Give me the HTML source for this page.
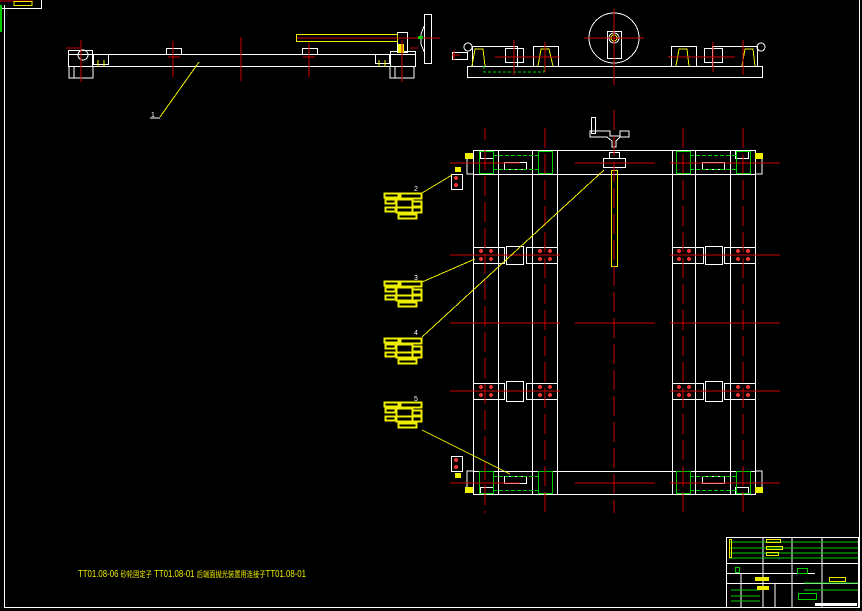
<!DOCTYPE html>
<html><head><meta charset="utf-8"><style>
html,body{margin:0;padding:0;background:#000;}
svg{display:block}
text{font-family:"Liberation Sans","Noto Sans CJK SC",sans-serif}
</style></head><body>
<svg width="862" height="611" viewBox="0 0 862 611" xmlns="http://www.w3.org/2000/svg" shape-rendering="crispEdges">
<rect width="862" height="611" fill="#000"/>
<g stroke="#fff" fill="none" stroke-width="1">
<path d="M4.5 5V607.5H859.5V0"/>
<path d="M0 8.5H41.5V0"/>
</g>
<line x1="0" y1="1" x2="33" y2="1" stroke="#c00"/>
<rect x="14" y="1.5" width="18" height="4" fill="none" stroke="#ee0"/>
<line x1="1" y1="5" x2="1" y2="32" stroke="#0c0" stroke-width="2"/>

<g stroke="#fff" fill="none">
<rect x="68.5" y="54.5" width="347" height="12"/>
<rect x="68.5" y="50.5" width="24" height="16"/>
<path d="M69 66v12h24V66M74 66v12h14"/>
<rect x="93.5" y="54.5" width="15" height="10"/>
<rect x="166.5" y="48.5" width="15" height="6"/>
<rect x="302.5" y="48.5" width="15" height="6"/>
<rect x="375.5" y="54.5" width="14" height="9"/>
<rect x="390.5" y="51.5" width="25" height="15"/>
<path d="M390 66v12h24V66M395 66v12h14"/>
<rect x="397.5" y="32.5" width="10" height="20"/>
<rect x="424.5" y="14.5" width="7" height="49"/>
<path d="M425 24l-4 10v10l4 10"/>
<circle cx="83" cy="55" r="5"/>
<path d="M150 118h10"/>
</g>
<rect x="296.5" y="34.5" width="101" height="7" fill="none" stroke="#ee0"/>
<rect x="398" y="44" width="6" height="9" fill="#ee0"/>
<line x1="297" y1="38" x2="435" y2="38" stroke="#c00"/>
<line x1="408" y1="38" x2="440" y2="38" stroke="#c00"/>
<rect x="418" y="36" width="5" height="3" fill="#0c0"/>
<g stroke="#c00">
<line x1="241" y1="37" x2="241" y2="81"/>
<line x1="173" y1="41" x2="173" y2="77"/>
<line x1="309" y1="43" x2="309" y2="77"/>
<line x1="81" y1="40" x2="81" y2="82"/>
<line x1="402" y1="40" x2="402" y2="82"/>
<line x1="66" y1="48" x2="80" y2="48"/>
<line x1="168" y1="57" x2="180" y2="57"/>
<line x1="303" y1="57" x2="315" y2="57"/>
<line x1="410" y1="48" x2="418" y2="48"/>
</g>
<g stroke="#ee0"><line x1="98" y1="60" x2="98" y2="67"/><line x1="104" y1="60" x2="104" y2="67"/><line x1="379" y1="60" x2="379" y2="67"/><line x1="385" y1="60" x2="385" y2="67"/></g>
<line x1="199" y1="62" x2="160" y2="117" stroke="#ee0"/>
<text x="151" y="117" fill="#fff" font-size="7">1</text>

<g stroke="#fff" fill="none">
<rect x="467.5" y="66.5" width="295" height="11"/>
<circle cx="614" cy="38" r="25"/>
<rect x="607.5" y="31.5" width="14" height="27"/>
<circle cx="614" cy="38" r="5"/>
<rect x="472.5" y="46.5" width="45" height="20"/>
<rect x="505.5" y="48.5" width="18" height="14"/>
<rect x="533.5" y="46.5" width="25" height="20"/>
<rect x="671.5" y="46.5" width="25" height="20"/>
<rect x="704.5" y="48.5" width="18" height="14"/>
<rect x="712.5" y="46.5" width="45" height="20"/>
<circle cx="468" cy="47" r="4"/><circle cx="761" cy="47" r="4"/>
<rect x="452.5" y="52.5" width="15" height="7"/>
</g>
<g stroke="#ee0" fill="none"><path d="M472 66l3-17h8l2 17M538 66l3-17h8l4 17M676 66l3-17h8l2 17M742 66l3-17h8l2 17"/></g>
<path d="M484 66v6h60v-6" stroke="#0c0" fill="none" stroke-dasharray="3 2"/>
<circle cx="614" cy="38" r="3" fill="none" stroke="#ee0"/>
<g stroke="#c00">
<line x1="614" y1="9" x2="614" y2="85"/>
<line x1="584" y1="38" x2="644" y2="38"/>
<line x1="514" y1="40" x2="514" y2="75"/>
<line x1="545" y1="42" x2="545" y2="72"/>
<line x1="713" y1="42" x2="713" y2="72"/>
<line x1="743" y1="40" x2="743" y2="75"/>
<line x1="495" y1="57" x2="560" y2="57"/>
<line x1="668" y1="57" x2="735" y2="57"/>
<line x1="452" y1="55" x2="460" y2="55"/>
<line x1="454" y1="50" x2="454" y2="60"/>
</g>

<g stroke="#fff" fill="none">
<path d="M473.5 150V495M498.5 150V495M532.5 150V495M557.5 150V495M672.5 150V495M695.5 150V495M730.5 150V495M755.5 150V495"/>
<rect x="473.5" y="150.5" width="282" height="344"/>
<path d="M473 174.5H755M473 471.5H755"/>
<path d="M467 153v21h6M762 153v21h-7M467 492v-21h6M762 492v-21h-7"/>
<rect x="473.5" y="247.5" width="31" height="16"/><rect x="526.5" y="247.5" width="31" height="16"/><rect x="506.5" y="246.5" width="17" height="18"/>
<rect x="672.5" y="247.5" width="31" height="16"/><rect x="724.5" y="247.5" width="31" height="16"/><rect x="705.5" y="246.5" width="17" height="18"/>
<rect x="473.5" y="383.5" width="31" height="16"/><rect x="526.5" y="383.5" width="31" height="16"/><rect x="506.5" y="381.5" width="17" height="20"/>
<rect x="672.5" y="383.5" width="31" height="16"/><rect x="724.5" y="383.5" width="31" height="16"/><rect x="705.5" y="381.5" width="17" height="20"/>
<rect x="504.5" y="162.5" width="22" height="7"/><rect x="702.5" y="162.5" width="22" height="7"/>
<rect x="504.5" y="476.5" width="22" height="7"/><rect x="702.5" y="476.5" width="22" height="7"/>
<rect x="603.5" y="158.5" width="22" height="9"/><rect x="609.5" y="152.5" width="10" height="6"/>
<path d="M590 131h20v5h10v-5h9v6h-9l-4 4v6h-4v-6l-5-4h-17z"/>
<rect x="591.5" y="117.5" width="4" height="16"/>
<rect x="451.5" y="174.5" width="11" height="15"/><rect x="451.5" y="456.5" width="11" height="15"/>
<rect x="480.5" y="151.5" width="13" height="7"/><rect x="735.5" y="151.5" width="13" height="7"/>
<rect x="480.5" y="487.5" width="13" height="7"/><rect x="735.5" y="487.5" width="13" height="7"/>
</g>
<g stroke="#0c0" fill="none">
<rect x="479.5" y="151.5" width="14" height="22"/><rect x="538.5" y="151.5" width="14" height="22"/>
<rect x="676.5" y="151.5" width="14" height="22"/><rect x="736.5" y="151.5" width="14" height="22"/>
<rect x="479.5" y="471.5" width="14" height="22"/><rect x="538.5" y="471.5" width="14" height="22"/>
<rect x="676.5" y="471.5" width="14" height="22"/><rect x="736.5" y="471.5" width="14" height="22"/>
<path d="M493 155.5H538M493 169.5H538M690 155.5H736M690 169.5H736M493 476.5H538M493 490.5H538M690 476.5H736M690 490.5H736" stroke-dasharray="4 2"/>
</g>
<rect x="611.5" y="170.5" width="6" height="96" fill="none" stroke="#ee0"/>
<g fill="#ee0"><rect x="465" y="153" width="8" height="6"/><rect x="755" y="153" width="8" height="6"/><rect x="465" y="487" width="8" height="6"/><rect x="755" y="487" width="8" height="6"/><rect x="455" y="167" width="6" height="5"/><rect x="455" y="473" width="6" height="5"/></g>
<g stroke="#c00">
<path d="M485 128V140M485 150V480M485 485V513M545 128V513M614 110V513M683 128V513M743 128V513" stroke-dasharray="20 6"/>
<path d="M450 163H520M575 163H655M670 163H780M450 255H560M670 255H780M450 323H560M575 323H655M670 323H780M450 391H560M670 391H780M450 483H520M575 483H655M670 483H780"/>
</g>
<g fill="#e33">
<circle cx="481" cy="251" r="2"/><circle cx="491" cy="251" r="2"/><circle cx="481" cy="259" r="2"/><circle cx="491" cy="259" r="2"/>
<circle cx="540" cy="251" r="2"/><circle cx="550" cy="251" r="2"/><circle cx="540" cy="259" r="2"/><circle cx="550" cy="259" r="2"/>
<circle cx="679" cy="251" r="2"/><circle cx="689" cy="251" r="2"/><circle cx="679" cy="259" r="2"/><circle cx="689" cy="259" r="2"/>
<circle cx="738" cy="251" r="2"/><circle cx="748" cy="251" r="2"/><circle cx="738" cy="259" r="2"/><circle cx="748" cy="259" r="2"/>
<circle cx="481" cy="387" r="2"/><circle cx="491" cy="387" r="2"/><circle cx="481" cy="395" r="2"/><circle cx="491" cy="395" r="2"/>
<circle cx="540" cy="387" r="2"/><circle cx="550" cy="387" r="2"/><circle cx="540" cy="395" r="2"/><circle cx="550" cy="395" r="2"/>
<circle cx="679" cy="387" r="2"/><circle cx="689" cy="387" r="2"/><circle cx="679" cy="395" r="2"/><circle cx="689" cy="395" r="2"/>
<circle cx="738" cy="387" r="2"/><circle cx="748" cy="387" r="2"/><circle cx="738" cy="395" r="2"/><circle cx="748" cy="395" r="2"/>
<circle cx="456" cy="178" r="2"/><circle cx="456" cy="185" r="2"/><circle cx="456" cy="460" r="2"/><circle cx="456" cy="467" r="2"/>
</g>

<g stroke="#ee0" fill="none">
<path d="M422 193L452 175M422 282L475 259M422 337L604 170M422 430L510 474"/>
</g>
<g fill="#fff" font-size="7"><text x="414" y="191">2</text><text x="414" y="280">3</text><text x="414" y="335">4</text><text x="414" y="401">5</text></g>
<g stroke="#ee0" fill="none" stroke-width="1.6" id="b">
<rect x="384.5" y="193.5" width="14" height="4"/><rect x="400.5" y="193.5" width="21" height="5"/>
<rect x="385.5" y="199.5" width="10" height="4"/><rect x="396.5" y="199.5" width="16" height="8"/><rect x="412.5" y="201.5" width="9" height="5"/>
<rect x="385.5" y="207.5" width="10" height="4"/><rect x="396.5" y="207.5" width="16" height="5"/><rect x="412.5" y="207.5" width="9" height="5"/>
<rect x="398.5" y="214.5" width="18" height="4"/>
</g>
<use href="#b" y="88"/><use href="#b" y="145"/><use href="#b" y="209"/>

<text x="78" y="577" fill="#ee0" font-size="10" textLength="228" lengthAdjust="spacingAndGlyphs">TT01.08-06 <tspan font-size="8">砂轮固定子</tspan> TT01.08-01 <tspan font-size="8">后端面抛光装置用连接子</tspan>TT01.08-01</text>

<g stroke="#fff" fill="none">
<rect x="726.5" y="537.5" width="132" height="70"/>
<path d="M726 563.5H859M726 573.5H815M726 583.5H859M763 537V607M792 537V607M822 537V607M741 573V607M775 583V607"/>
</g>
<g stroke="#0c0" fill="none">
<path d="M729 542H858M729 548H858M729 553H858M729 558H858M731 590H760M731 596H760M731 601H760M804 583H858M804 590H858"/>
<rect x="797.5" y="568.5" width="10" height="5"/><rect x="735.5" y="567.5" width="4" height="5"/>
<rect x="798.5" y="593.5" width="18" height="6"/>
</g>
<g fill="#ee0"><rect x="755" y="577" width="14" height="4"/><rect x="757" y="586" width="12" height="4"/></g>
<g stroke="#ee0" fill="none"><rect x="766.5" y="539.5" width="14" height="3"/><rect x="766.5" y="546.5" width="16" height="3"/><rect x="766.5" y="552.5" width="12" height="3"/><rect x="829.5" y="577.5" width="16" height="4"/><rect x="729.5" y="539.5" width="2" height="18"/></g>
<g fill="#fff"><rect x="815" y="603" width="42" height="3"/></g>
</svg>
</body></html>
